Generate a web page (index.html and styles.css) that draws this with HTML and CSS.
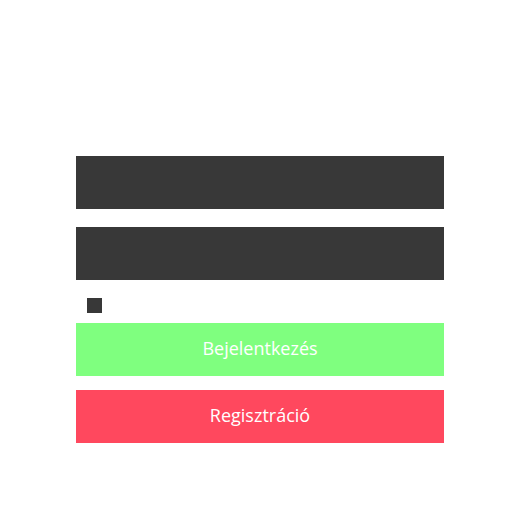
FILE: index.html
```html
<!DOCTYPE html>
<html>
<head>
<meta charset="utf-8">
<link rel="stylesheet" href="styles.css">
</head>
<body>
<form class="login">
  <input class="field" type="text">
  <input class="field field-second" type="password">
  <div class="remember"><span class="check"></span></div>
  <button class="btn btn-login" type="button">Bejelentkezés</button>
  <button class="btn btn-register" type="button">Regisztráció</button>
</form>
</body>
</html>
```
FILE: styles.css
```css
html, body {
  margin: 0;
  padding: 0;
  background: #ffffff;
}
body {
  font-family: "Open Sans", "Liberation Sans", sans-serif;
}
.login {
  width: 368px;
  margin: 156px 0 0 76px;
  display: flex;
  flex-direction: column;
}
.field {
  display: block;
  box-sizing: border-box;
  width: 368px;
  height: 53px;
  margin: 0;
  border: none;
  outline: none;
  padding: 0;
  background: #383838;
}
.field-second {
  margin-top: 18px;
}
.remember {
  height: 43px;
  padding: 18px 0 0 11px;
  box-sizing: border-box;
}
.check {
  display: block;
  width: 15px;
  height: 15px;
  background: #383838;
}
.btn {
  display: block;
  width: 368px;
  height: 53px;
  margin: 0;
  border: none;
  padding: 0 0 3px 0;
  color: #ffffff;
  font-family: "Open Sans", "Liberation Sans", sans-serif;
  font-size: 18px;
  text-align: center;
}
.btn-login {
  background: #7fff7f;
}
.btn-register {
  margin-top: 14px;
  background: #ff485e;
}
```
